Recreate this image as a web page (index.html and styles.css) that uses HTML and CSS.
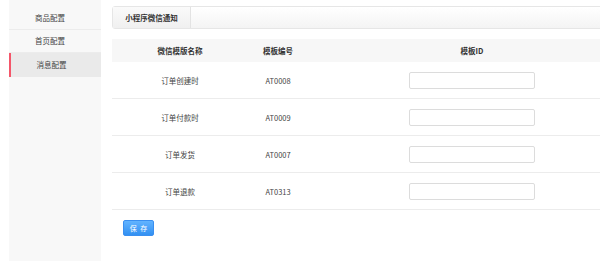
FILE: index.html
```html
<!DOCTYPE html>
<html lang="zh-CN">
<head>
    <meta charset="UTF-8">
    <title>消息配置</title>
    <link rel="stylesheet" href="styles.css">
</head>
<body>
    <div class="page">
        <div class="sidebar">
            <div class="side-item">商品配置</div>
            <div class="side-item">首页配置</div>
            <div class="side-item active">消息配置</div>
        </div>

        <div class="main">
            <div class="tabs">
                <div class="tab">小程序微信通知</div>
            </div>

            <table class="tpl-table">
                <thead>
                    <tr>
                        <th class="col-name">微信模版名称</th>
                        <th class="col-code">模板编号</th>
                        <th>模板ID</th>
                    </tr>
                </thead>
                <tbody>
                    <tr>
                        <td>订单创建时</td>
                        <td>AT0008</td>
                        <td><input type="text" class="tpl-input"></td>
                    </tr>
                    <tr>
                        <td>订单付款时</td>
                        <td>AT0009</td>
                        <td><input type="text" class="tpl-input"></td>
                    </tr>
                    <tr>
                        <td>订单发货</td>
                        <td>AT0007</td>
                        <td><input type="text" class="tpl-input"></td>
                    </tr>
                    <tr>
                        <td>订单退款</td>
                        <td>AT0313</td>
                        <td><input type="text" class="tpl-input"></td>
                    </tr>
                </tbody>
            </table>

            <div class="actions">
                <button class="btn-save">保 存</button>
            </div>
        </div>
    </div>
</body>
</html>
```

FILE: styles.css
```css
html, body {
    margin: 0;
    padding: 0;
    height: 100%;
    overflow: hidden;
}
body {
    font-family: "Noto Sans CJK SC", "Liberation Sans", sans-serif;
    font-size: 7.5px;
    color: #444;
    background-color: #ffffff;
}
.page {
    display: flex;
    height: 100%;
    padding-left: 9px;
}
.sidebar {
    width: 92px;
    flex-shrink: 0;
    background-color: #f8f8f8;
    padding-top: 7px;
}
.side-item {
    height: 22px;
    line-height: 22px;
    text-align: center;
    padding-right: 10px; /* labels sit a little left of centre */
    border-bottom: 1px solid #ececec;
    color: #444;
}
.side-item.active {
    background-color: #eaeaea;
    box-shadow: inset 2px 0 0 #f4566a; /* red marker on the left */
    border-bottom: none;
    height: 24px;
    line-height: 24px;
    padding-right: 7px;
}
.main {
    flex: 1;
    padding-left: 11px;
    padding-top: 6px;
    overflow: hidden;
}
.tabs {
    display: flex;
    height: 21px;
    border: 1px solid #e6e6e6;
    border-radius: 3px;
    background: linear-gradient(#ffffff, #f4f4f4);
    width: 530px;
}
.tab {
    width: 77px;
    line-height: 21px;
    text-align: center;
    font-weight: bold;
    color: #333;
    border-right: 1px solid #e3e3e3;
    background: linear-gradient(#fafafa, #f0f0f0);
}
.tpl-table {
    margin-top: 10px;
    width: 524px;
    border-collapse: collapse;
    table-layout: fixed;
}
.tpl-table th {
    height: 23px;
    padding: 0;
    background-color: #f7f7f7;
    font-weight: bold;
    color: #333;
    text-align: center;
}
.tpl-table .col-name {
    width: 136px;
}
.tpl-table .col-code {
    width: 60px;
}
.tpl-table td {
    height: 36px;
    padding: 0;
    text-align: center;
    border-bottom: 1px solid #ececec;
}
.tpl-input {
    box-sizing: border-box;
    width: 126px;
    height: 17px;
    border: 1px solid #dcdcdc;
    border-radius: 2px;
    padding: 0 4px;
    font-size: 7.5px;
    display: block;
    margin: 0 auto;
}
.actions {
    padding: 10px 0 0 11px;
}
.btn-save {
    width: 31px;
    height: 16px;
    border: 1px solid #3a8ff0;
    border-radius: 2px;
    background: linear-gradient(#62b3ff, #3290f2);
    color: #ffffff;
    font-family: inherit;
    font-size: 7px;
    letter-spacing: 1px;
    padding: 0 0 0 1px;
    cursor: pointer;
}
```
